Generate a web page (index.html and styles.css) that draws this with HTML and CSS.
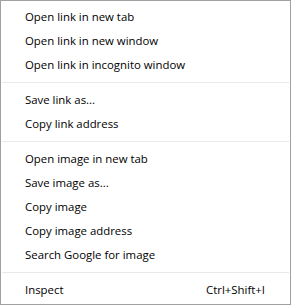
FILE: index.html
```html
<!DOCTYPE html>
<html lang="en">
<head>
  <meta charset="UTF-8">
  <title>Context menu</title>
  <link rel="stylesheet" href="styles.css">
</head>
<body>
  <div class="menu">
    <div class="item">Open link in new tab</div>
    <div class="item">Open link in new window</div>
    <div class="item">Open link in incognito window</div>
    <div class="sep"></div>
    <div class="item">Save link as...</div>
    <div class="item">Copy link address</div>
    <div class="sep"></div>
    <div class="item">Open image in new tab</div>
    <div class="item">Save image as...</div>
    <div class="item">Copy image</div>
    <div class="item">Copy image address</div>
    <div class="item">Search Google for image</div>
    <div class="sep"></div>
    <div class="item"><span>Inspect</span><span class="key">Ctrl+Shift+I</span></div>
  </div>
</body>
</html>
```
FILE: styles.css
```css
* { margin:0; padding:0; box-sizing:border-box; }
body {
  font-family: "Open Sans", "Noto Sans", sans-serif;
  background:#fff;
}
.menu {
  width:291px; height:305px;
  border:1px solid #a0a0a0;
  background:#fff;
  padding:3px 0;
  color:#000;
  font-size:11.4px;
}
.item {
  height:24px;
  display:flex; align-items:center; justify-content:space-between;
  padding:0 25px 0 24px;
  white-space:nowrap;
}
.sep {
  height:1px;
  background:#e9e9e9;
  margin:6px 1px 4px 1px;
}
```
